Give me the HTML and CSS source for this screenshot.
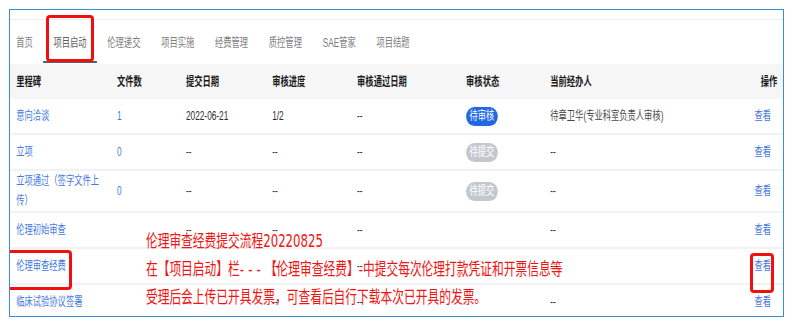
FILE: index.html
```html
<!DOCTYPE html>
<html lang="zh-CN">
<head>
    <meta charset="UTF-8">
    <meta name="viewport" content="width=device-width, initial-scale=1.0">
    <title>项目启动</title>
    <link rel="stylesheet" href="styles.css">
</head>
<body>
    <div class="frame">
        <div class="page">
            <div class="tabs">
                <span class="tab">首页</span>
                <span class="tab active">项目启动</span>
                <span class="tab">伦理递交</span>
                <span class="tab">项目实施</span>
                <span class="tab">经费管理</span>
                <span class="tab">质控管理</span>
                <span class="tab">SAE管家</span>
                <span class="tab">项目结题</span>
            </div>
            <div class="table">
                <div class="row head">
                    <div>里程碑</div><div>文件数</div><div>提交日期</div><div>审核进度</div>
                    <div>审核通过日期</div><div>审核状态</div><div>当前经办人</div><div class="op">操作</div>
                </div>
                <div class="row">
                    <div class="link">意向洽谈</div><div class="link">1</div><div>2022-06-21</div><div>1/2</div>
                    <div>--</div><div><span class="badge blue">待审核</span></div>
                    <div class="who">待章卫华(专业科室负责人审核)</div><div class="op link">查看</div>
                </div>
                <div class="row">
                    <div class="link">立项</div><div class="link">0</div><div>--</div><div>--</div>
                    <div>--</div><div><span class="badge gray">待提交</span></div>
                    <div>--</div><div class="op link">查看</div>
                </div>
                <div class="row tall">
                    <div class="link">立项通过（签字文件上传）</div><div class="link">0</div><div>--</div><div>--</div>
                    <div>--</div><div><span class="badge gray">待提交</span></div>
                    <div>--</div><div class="op link">查看</div>
                </div>
                <div class="row">
                    <div class="link">伦理初始审查</div><div></div><div>--</div><div>--</div>
                    <div>--</div><div></div><div>--</div><div class="op link">查看</div>
                </div>
                <div class="row">
                    <div class="link">伦理审查经费</div><div></div><div>--</div><div>--</div>
                    <div>--</div><div></div><div>--</div><div class="op link">查看</div>
                </div>
                <div class="row">
                    <div class="link">临床试验协议签署</div><div></div><div>--</div><div>--</div>
                    <div>--</div><div></div><div>--</div><div class="op link">查看</div>
                </div>
            </div>
            <div class="note">
                <div>伦理审查经费提交流程20220825</div>
                <div>在【项目启动】栏<span class="dash">---</span>【伦理审查经费】-中提交每次伦理打款凭证和开票信息等</div>
                <div>受理后会上传已开具发票，可查看后自行下载本次已开具的发票。</div>
            </div>
        </div>
        <div class="mark mark-tab"></div>
        <div class="mark mark-row"></div>
        <div class="mark mark-view"></div>
    </div>
</body>
</html>
```

FILE: styles.css
```css
body {
    margin: 0;
    background: #fff;
    font-family: "Liberation Sans", "Noto Sans CJK SC", sans-serif;
    font-size: 12px;
    color: #2b2b2b;
}

.frame {
    position: relative;
    width: 775px;
    height: 308px;
    margin: 9px 0 0 9px;
    border: 1px solid #3a8dd3;
    box-sizing: border-box;
    overflow: hidden;
}

/* the screenshot is squeezed sideways, so the page is drawn wide and narrowed */
.page {
    position: relative;
    width: 1120px;
    transform: scaleX(0.69);
    transform-origin: 0 0;
}

.tabs {
    display: flex;
    height: 44px;
    margin-top: 9px;
    padding-left: 9px;
    border-top: 1px solid #eee;
    box-sizing: border-box;
}

.tab {
    display: flex;
    align-items: center;
    padding: 2px 15px 0;
    color: #7f7f7f;
    box-sizing: border-box;
    border-bottom: 2px solid transparent;
}

.tab:first-child {
    padding-left: 0;
}

.tab.active {
    color: #5f5f5f;
    border-bottom-color: #56606b;
}

.row {
    display: grid;
    grid-template-columns: 146px 100px 125px 123px 158px 122px 1fr 80px;
    align-items: center;
    height: 36px;
    border-bottom: 2px solid #f2f2f2;
    box-sizing: border-box;
}

.row > div {
    padding: 0 9px;
    line-height: 20px;
}

.row.head {
    height: 35px;
    margin-top: 1px;
    background: #f6f6f7;
    border-bottom: none;
    font-weight: bold;
    color: #1a1a1a;
}

.row.tall {
    height: 42px;
}

.row .op {
    text-align: right;
    padding-right: 17px;
}

.row.head .op {
    padding-right: 8px;
}

.link {
    color: #4479de;
}

.who {
    color: #4a4a4a;
}

.badge {
    display: inline-block;
    height: 19px;
    line-height: 19px;
    padding: 0 5px;
    border-radius: 12px / 9.5px;
    color: #fff;
    vertical-align: middle;
}

.badge.blue {
    background: #2169e4;
}

.badge.gray {
    background: #c3c8cf;
}

.note {
    position: absolute;
    left: 197px;
    top: 208px;
    font-family: "DejaVu Sans", "Noto Sans CJK SC", sans-serif;
    font-size: 17px;
    line-height: 28px;
    color: #f01414;
    white-space: nowrap;
}

.dash {
    letter-spacing: 6px;
}

.mark {
    position: absolute;
    border: 3px solid #f01010;
    border-radius: 4px;
    box-sizing: border-box;
}

.mark-tab {
    left: 36px;
    top: 5px;
    width: 48px;
    height: 47px;
}

.mark-row {
    left: -6px;
    top: 240px;
    width: 68px;
    height: 40px;
}

.mark-view {
    left: 740px;
    top: 243px;
    width: 24px;
    height: 40px;
}
```
